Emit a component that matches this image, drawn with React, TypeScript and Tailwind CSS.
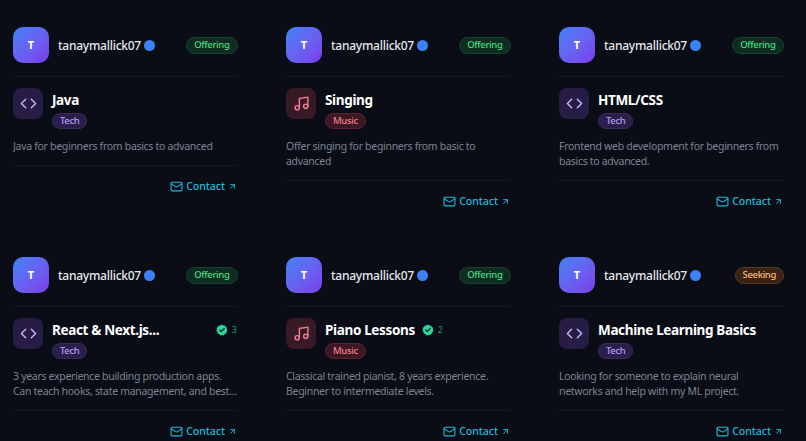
import { Code, Music, Mail, ArrowUpRight } from "lucide-react";

type Listing = {
  title: string;
  category: "Tech" | "Music";
  description: string;
  kind?: "Offering" | "Seeking";
  endorsements?: number;
};

const listings: Listing[] = [
  { title: "Java", category: "Tech", description: "Java for beginners from basics to advanced" },
  { title: "Singing", category: "Music", description: "Offer singing for beginners from basic to advanced" },
  { title: "HTML/CSS", category: "Tech", description: "Frontend web development for beginners from basics to advanced." },
  {
    title: "React & Next.js...",
    category: "Tech",
    description: "3 years experience building production apps. Can teach hooks, state management, and best practices for modern apps.",
    endorsements: 3,
  },
  {
    title: "Piano Lessons",
    category: "Music",
    description: "Classical trained pianist, 8 years experience. Beginner to intermediate levels.",
    endorsements: 2,
  },
  {
    title: "Machine Learning Basics",
    category: "Tech",
    description: "Looking for someone to explain neural networks and help with my ML project.",
    kind: "Seeking",
  },
];

function VerifiedBadge() {
  return (
    <svg viewBox="0 0 24 24" className="w-[12px] h-[12px] shrink-0">
      <path
        d="M12 1l2.8 1.9 3.3-.1 1.2 3 2.9 1.6-.7 3.3 1.5 2.9-2.3 2.3-.2 3.3-3.2.8L15.4 23l-3.4-.9-3.4.9-1.9-2.8-3.2-.8-.2-3.3L.5 13.7 2 10.8l-.7-3.3 2.9-1.6 1.2-3 3.3.1z"
        fill="#34d399"
      />
      <path d="M7.5 12.2l3 3 6-6" fill="none" stroke="#0f3d33" strokeWidth="2.8" strokeLinecap="round" strokeLinejoin="round" />
    </svg>
  );
}

function ListingCard({ listing }: { listing: Listing }) {
  const isMusic = listing.category === "Music";
  const seeking = listing.kind === "Seeking";
  const pushBadgeRight = listing.title.endsWith("...");
  return (
    <div className="flex flex-col">
      <div className="flex items-center justify-between pb-[13px] border-b border-[#141824]">
        <div className="flex items-center gap-[9px]">
          <div className="w-9 h-9 rounded-[10px] bg-gradient-to-br from-[#3b82f6] to-[#7c3aed] flex items-center justify-center text-white text-[11px] font-bold">
            T
          </div>
          <span className="text-[12px] font-medium tracking-[-0.25px] text-[#e5e7eb] translate-y-px">tanaymallick07</span>
          <span className="w-[11px] h-[11px] rounded-full bg-[#3b82f6] -ml-[6px]" />
        </div>
        <span
          className={
            seeking
              ? "px-[7px] h-[17px] flex items-center rounded-full border border-[#5c3a1e] bg-[#3a2315] text-[#fdba74] text-[9.5px] tracking-[-0.35px] font-medium"
              : "px-[7.5px] h-[17px] flex items-center rounded-full border border-[#14432f] bg-[#0f2c22] text-[#4ade80] text-[9.5px] tracking-[-0.35px] font-medium"
          }
        >
          {listing.kind ?? "Offering"}
        </span>
      </div>

      <div className="flex gap-[9px] pt-[11px]">
        <div
          className={
            isMusic
              ? "w-[30px] h-[31px] shrink-0 rounded-lg bg-[#381a26] flex items-center justify-center text-[#f27d93]"
              : "w-[30px] h-[31px] shrink-0 rounded-lg bg-[#271d44] flex items-center justify-center text-[#c4b5fd]"
          }
        >
          {isMusic ? <Music size={17} /> : <Code size={17} />}
        </div>
        <div className="flex-1 min-w-0">
          <div className={pushBadgeRight ? "flex items-center justify-between mt-[3px] h-[18px]" : "flex items-center gap-[7px] mt-[3px] h-[18px]"}>
            <h3 className="text-[13.5px] font-bold tracking-[-0.35px] text-white whitespace-nowrap">
              {listing.title}
            </h3>
            {listing.endorsements && (
              <div className="flex items-center gap-[4px] shrink-0 pr-px">
                <VerifiedBadge />
                <span className="text-[9px] text-[#0f9d74]">{listing.endorsements}</span>
              </div>
            )}
          </div>
          <span
            className={
              isMusic
                ? "flex w-fit items-center h-[16px] mt-[4px] px-[7px] rounded-full border border-[#5a2230] bg-[#3c1822] text-[#f27d93] text-[9.5px] tracking-[-0.35px] font-medium"
                : "flex w-fit items-center h-[16px] mt-[4px] px-[7px] rounded-full border border-[#382a5c] bg-[#2a1f4b] text-[#b49cf5] text-[9.5px] tracking-[-0.35px] font-medium"
            }
          >
            {listing.category}
          </span>
        </div>
      </div>

      <p className="mt-[10px] text-[10.5px] leading-[15px] tracking-[-0.3px] text-[#7b8394] line-clamp-2">
        {listing.description}
      </p>

      <div className="mt-[11px] pt-[13px] border-t border-[#141824] flex justify-end">
        <a className="flex items-center h-[15px] pr-px text-[#22b8d8] text-[10.5px] font-medium">
          <Mail size={13} className="mr-[3px]" />
          Contact
          <ArrowUpRight size={9} strokeWidth={2.5} className="ml-[3px]" />
        </a>
      </div>
    </div>
  );
}

export default function App() {
  return (
    <div className="w-[806px] h-[441px] overflow-hidden bg-[#0a0d16] font-['Noto_Sans',sans-serif]">
      <div className="grid grid-cols-3 gap-x-12 gap-y-12 pl-[13px] pr-[22px] pt-[27px]">
        {listings.map((listing) => (
          <ListingCard key={listing.title} listing={listing} />
        ))}
      </div>
    </div>
  );
}
